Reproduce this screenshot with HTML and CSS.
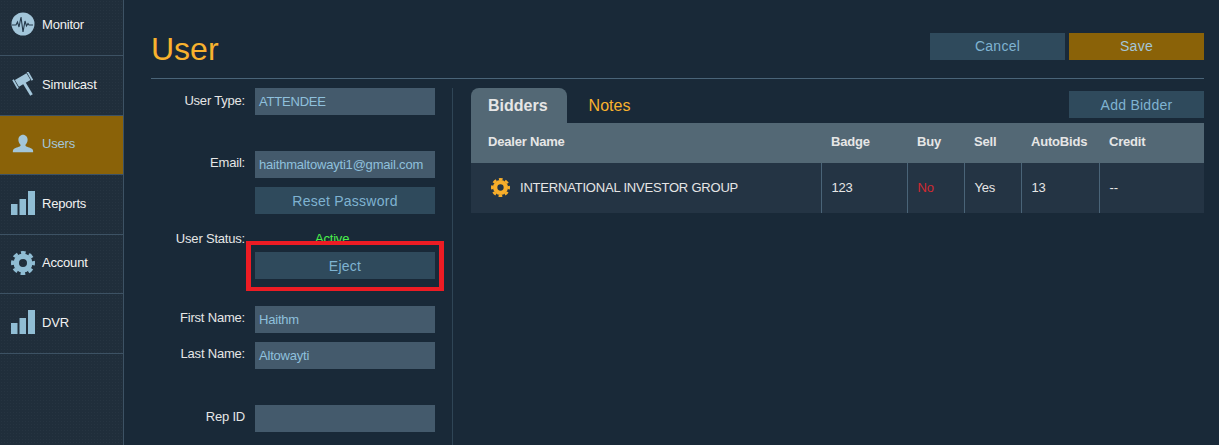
FILE: index.html
```html
<!DOCTYPE html>
<html lang="en">
<head>
    <meta charset="UTF-8">
    <title>User</title>
    <link rel="stylesheet" href="styles.css">
</head>
<body>
    <div class="sidebar">
        <a class="nav-item">
            <svg class="nav-icon" viewBox="0 0 24 24"><circle cx="12" cy="12" r="11.500" fill="#a3c6da"/><path d="M1 13h4l1.500-3 1.500 5 2-10 2 15 2-11 1.500 5 1.500-2.500 1 1.500h4" fill="none" stroke="#24384a" stroke-width="1.100"/></svg>
            <span>Monitor</span>
        </a>
        <a class="nav-item">
            <svg class="nav-icon" viewBox="0 0 24 24"><path d="M12 9l8.500 14" stroke="#a3c6da" stroke-width="3" fill="none"/><g transform="rotate(-30 11.700 8)" fill="#a3c6da"><rect x="5" y="4" width="13.400" height="8"/><rect x="2.500" y="3" width="1.800" height="10"/><rect x="19.100" y="3" width="1.800" height="10"/></g></svg>
            <span>Simulcast</span>
        </a>
        <a class="nav-item active">
            <svg class="nav-icon" viewBox="-1 -1 26 26"><path d="M12 2c3 0 5 2.500 5 5.500 0 2.200-1 4.200-2.300 5.200v1.300c0 1 5.300 2 7.300 3.500 1 .8 1 2.500 1 3.500H1c0-1 0-2.700 1-3.500 2-1.500 7.300-2.500 7.300-3.500v-1.300C8 11.700 7 9.700 7 7.500 7 4.500 9 2 12 2z" fill="#a3c6da"/></svg>
            <span>Users</span>
        </a>
        <a class="nav-item">
            <svg class="nav-icon" viewBox="0 0 24 24"><path d="M0 13h6.500v11H0zM8.500 8H15v16H8.500zM17 0h7v24h-7z" fill="#90bdd4"/></svg>
            <span>Reports</span>
        </a>
        <a class="nav-item">
            <svg class="nav-icon gear-icon" viewBox="0 0 24 24"><circle class="gear-teeth" cx="12" cy="12" r="10.500"/><circle class="gear-ring" cx="12" cy="12" r="6.750"/></svg>
            <span>Account</span>
        </a>
        <a class="nav-item">
            <svg class="nav-icon" viewBox="0 0 24 24"><path d="M0 13h6.500v11H0zM8.500 8H15v16H8.500zM17 0h7v24h-7z" fill="#90bdd4"/></svg>
            <span>DVR</span>
        </a>
    </div>

    <div class="principal">
        <div class="header">
            <h1>User</h1>
            <div class="header-btns">
                <button class="btn">Cancel</button>
                <button class="btn save">Save</button>
            </div>
        </div>

        <div class="content">
            <div class="user-form">
                <div class="row">
                    <label class="first">User Type:</label>
                    <div class="field">ATTENDEE</div>
                </div>
                <div class="row email-row">
                    <label>Email:</label>
                    <div class="field">haithmaltowayti1@gmail.com</div>
                </div>
                <div class="row reset-row">
                    <label></label>
                    <button class="btn wide">Reset Password</button>
                </div>
                <div class="row status-row">
                    <label>User Status:</label>
                    <div class="status">Active</div>
                </div>
                <div class="row eject-row">
                    <label></label>
                    <button class="btn wide">Eject</button>
                    <div class="highlight"></div>
                </div>
                <div class="row first-row">
                    <label>First Name:</label>
                    <div class="field">Haithm</div>
                </div>
                <div class="row last-row">
                    <label>Last Name:</label>
                    <div class="field">Altowayti</div>
                </div>
                <div class="row rep-row">
                    <label>Rep ID</label>
                    <div class="field"></div>
                </div>
            </div>

            <div class="bidders">
                <div class="tabs">
                    <div class="tab selected">Bidders</div>
                    <div class="tab">Notes</div>
                    <button class="btn add">Add Bidder</button>
                </div>
                <table>
                    <thead>
                        <tr>
                            <th class="c-name">Dealer Name</th>
                            <th class="c-badge">Badge</th>
                            <th class="c-buy">Buy</th>
                            <th class="c-sell">Sell</th>
                            <th class="c-auto">AutoBids</th>
                            <th>Credit</th>
                        </tr>
                    </thead>
                    <tbody>
                        <tr>
                            <td class="c-name">
                                <div class="dealer">
                                    <svg class="gear" viewBox="0 0 24 24"><circle class="gear-teeth" cx="12" cy="12" r="10.500"/><circle class="gear-ring" cx="12" cy="12" r="6.750"/></svg>
                                    INTERNATIONAL INVESTOR GROUP
                                </div>
                            </td>
                            <td>123</td>
                            <td class="no">No</td>
                            <td>Yes</td>
                            <td>13</td>
                            <td>--</td>
                        </tr>
                    </tbody>
                </table>
            </div>
        </div>
    </div>
</body>
</html>
```

FILE: styles.css
```css
html, body {
    height: 100%;
}

body {
    margin: 0;
    display: flex;
    overflow: hidden;
    font-family: "Liberation Sans", Arial, sans-serif;
    font-size: 13px;
    letter-spacing: -0.2px;
    background-color: #192938;
    color: #e6e6e6;
}

.sidebar {
    width: 123px;
    flex: none;
    border-right: 1px solid #3d5264;
    background-color: #202e3b;
    background-image: radial-gradient(#263441 1px, transparent 1px);
    background-size: 3px 3px;
}

.nav-item {
    display: flex;
    align-items: center;
    gap: 7px;
    height: 59px;
    box-sizing: border-box;
    padding: 0 0 3px 11px;
    border-bottom: 1px solid #3d5264;
    color: #f2f2f2;
}

.nav-item:nth-child(even) {
    height: 60px;
}

.nav-item:first-child {
    height: 56px;
    padding-bottom: 7px;
}

.nav-item.active {
    background-color: #8a6208;
    color: #a3c6da;
}

.nav-icon {
    width: 24px;
    height: 24px;
    flex: none;
}

.gear-teeth {
    fill: none;
    stroke-width: 3;
    stroke-dasharray: 4.700 3.547;
    stroke-dashoffset: 2.350;
}

.gear-ring {
    fill: none;
    stroke-width: 5.500;
}

.gear-icon circle {
    stroke: #90bdd4;
}

.gear circle {
    stroke: #f8ae2a;
}

.principal {
    flex: 1;
    padding: 0 15px 0 27px;
    min-width: 0;
}

.header {
    display: flex;
    justify-content: space-between;
    height: 78px;
    border-bottom: 1px solid #4a6478;
}

h1 {
    margin: 30px 0 0;
    font-size: 32px;
    line-height: 38px;
    font-weight: normal;
    letter-spacing: 0;
    color: #f8b22e;
}

.header-btns {
    display: flex;
    gap: 4px;
    padding-top: 33px;
}

.btn {
    display: block;
    width: 135px;
    height: 27px;
    padding: 0;
    border: none;
    background-color: #2f4a5c;
    color: #7fb3d1;
    font-family: inherit;
    font-size: 14px;
    letter-spacing: 0.25px;
}

.header-btns .btn {
    padding-bottom: 2px;
}

.btn.save {
    background-color: #8a6208;
    color: #a3c6da;
}

.btn.wide {
    width: 180px;
}

.content {
    display: flex;
    padding-top: 9px;
}

.user-form {
    width: 301px;
    flex: none;
    height: 358px;
    border-right: 1px solid #2f4556;
}

.row {
    display: flex;
    position: relative;
    gap: 10px;
}

.row label {
    width: 94px;
    padding-top: 4px;
    text-align: right;
}

.row label.first {
    padding-top: 5px;
}

.field {
    width: 172px;
    height: 27px;
    padding: 0 4px;
    background-color: #445a6c;
    color: #8fc0dc;
    line-height: 27px;
}

.email-row {
    margin-top: 36px;
}

.reset-row {
    margin-top: 9px;
}

.status-row {
    margin-top: 16px;
    height: 22px;
}

.status-row label {
    padding-top: 1px;
    line-height: 16px;
}

.status {
    padding: 1px 0 0 60px;
    color: #4cf04c;
    line-height: 16px;
}

.first-row {
    margin-top: 27px;
}

.last-row {
    margin-top: 9px;
}

.rep-row {
    margin-top: 36px;
}

.highlight {
    position: absolute;
    left: 95px;
    top: -11px;
    width: 188px;
    height: 42px;
    border-style: solid;
    border-color: #ed1c24;
    border-width: 4px 5px;
}

.bidders {
    flex: 1;
    margin-left: 18px;
}

.tabs {
    display: flex;
    align-items: flex-start;
    height: 35px;
}

.tab {
    padding: 0 22px;
    font-size: 16px;
    line-height: 35px;
    letter-spacing: 0;
    color: #f8b22e;
}

.tab.selected {
    padding: 0 19px 0 17px;
    border-radius: 8px 8px 0 0;
    background-color: #536875;
    color: #e6e6e6;
    font-weight: bold;
}

.btn.add {
    margin: 3px 0 0 auto;
}

table {
    width: 100%;
    border-collapse: collapse;
}

th {
    height: 40px;
    padding: 0 0 3px 10px;
    box-sizing: border-box;
    background-color: #536875;
    text-align: left;
}

td {
    height: 50px;
    padding: 0 0 1px 10px;
    box-sizing: border-box;
    background-color: #243444;
    border-left: 1px solid #4a6478;
}

td:first-child {
    border-left: none;
}

.c-name {
    width: 350px;
    padding-left: 17px;
}

.c-badge {
    width: 86px;
}

.c-buy {
    width: 57px;
}

.c-sell {
    width: 57px;
}

.c-auto {
    width: 78px;
}

.dealer {
    display: flex;
    align-items: center;
    gap: 10px;
    margin-left: 3px;
}

.gear {
    width: 19px;
    height: 19px;
}

.no {
    color: #d02a32;
}
```
